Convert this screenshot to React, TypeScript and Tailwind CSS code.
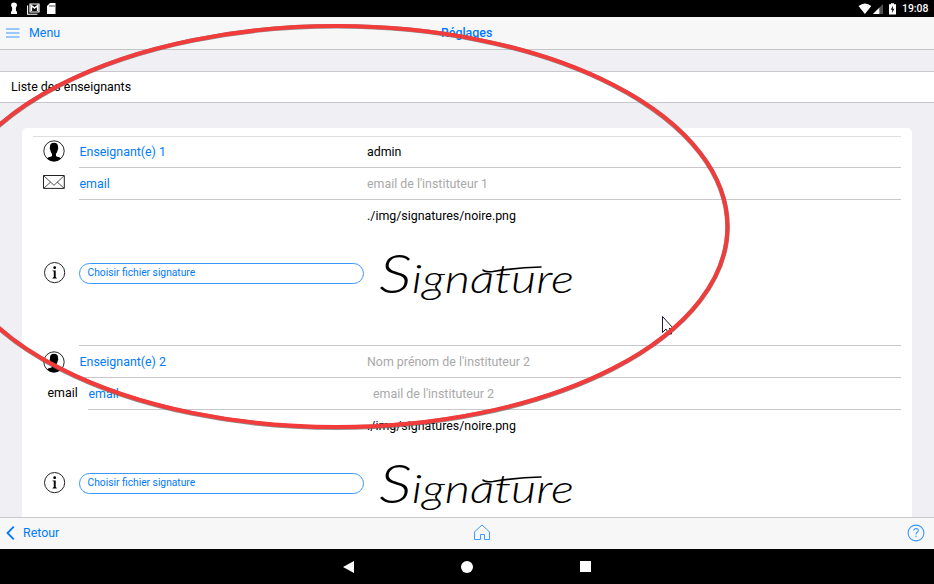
import React from "react";

function StatusBar() {
  return (
    <div className="flex h-[17px] shrink-0 items-center justify-between bg-black pl-[9px] pr-[6px] text-white">
      <div className="flex items-center">
        <svg width="10" height="13" viewBox="0 0 10 13" fill="#fff" className="mr-[8px]">
          <path d="M2 3.5A3 3 0 0 1 8 3.5L6.8 6L7 8.5L8 10V12H2V10L3 8.5L3.2 6Z" />
        </svg>
        <svg width="13" height="12" viewBox="0 0 13 12" fill="none" stroke="#fff" className="mr-[7px]">
          <path d="M.6 2.5V11.2H10.5" strokeWidth="1.1" />
          <path d="M3 1H12V9H3Z" strokeWidth="1.2" />
          <path d="M4.4 8V2.5L7.5 5L10.6 2.5V8" strokeWidth="1.5" />
        </svg>
        <svg width="9" height="11" viewBox="0 0 9 11">
          <path d="M3 0H8.5V11H0V3Z" fill="#fff" />
          <path d="M3 2V4M5 2V4M7 2V4" stroke="#222" strokeWidth=".8" />
        </svg>
      </div>
      <div className="flex items-center">
        <svg width="14" height="12" viewBox="0 0 14 12" className="mr-px">
          <path d="M.5 3Q7-2.2 13.3 3L6.9 11Z" fill="#fff" />
        </svg>
        <svg width="11" height="12" viewBox="0 0 11 12" className="mr-[5px]">
          <path d="M0 11L10 1V11Z" fill="#505050" />
          <path d="M0 11L6.3 4.7V11Z" fill="#fff" />
        </svg>
        <svg width="7" height="12" viewBox="0 0 7 12" className="mr-[6px]">
          <path d="M0 1.3H2V.2H5V1.3H7V11.5H0Z" fill="#fff" />
          <path d="M4 2.5L1.7 6.7H3.2L3 10L5.4 5.7H3.8Z" fill="#111" />
        </svg>
        <span className="w-[26px] whitespace-nowrap pt-px text-[10.4px] font-medium leading-4">19:08</span>
      </div>
    </div>
  );
}

function Person() {
  return (
    <svg width="22" height="22" viewBox="0 0 22 22">
      <circle cx="11" cy="11" r="10.2" fill="#fff" stroke="#111" strokeWidth=".9" />
      <path d="M11 2.7C8 2.7 6.7 4.6 7 7.5C6.4 7.5 6.8 9.5 7.3 10C7.6 12 8.6 13.1 9 14V16C7.8 17.1 5.2 17 4 18.4Q11 24 18 18.4C16.8 17 14.2 17.1 13 16V14C13.4 13.1 14.4 12 14.7 10C15.2 9.5 15.6 7.5 15 7.5C15.3 4.6 14 2.7 11 2.7Z" fill="#000" />
    </svg>
  );
}

function Envelope() {
  return (
    <svg width="22" height="14" viewBox="0 0 22 14" fill="none" stroke="#222">
      <path d="M.5 .5H21.3V13.4H.5Z" strokeWidth="1" />
      <path d="M.8 .8L11 10.3L21 .8M.8 13.2L7.7 7M21 13.2L14.2 7" strokeWidth=".8" />
    </svg>
  );
}

function Info() {
  return (
    <svg width="22" height="22" viewBox="0 0 22 22">
      <circle cx="10.6" cy="10.6" r="10.1" fill="none" stroke="#222" strokeWidth="1" />
      <circle cx="10.7" cy="5.7" r="1.4" />
      <path d="M8.5 8.6H11.7V15.1L12.8 15.9V16.4H8.5V15.9L9.8 15.1V9.4L8.5 9.1Z" />
    </svg>
  );
}

function SignatureBlock() {
  return (
    <div className="flex h-[145px]">
      <div className="flex w-[57px] items-center pl-[21.5px]"><Info /></div>
      <div className="flex w-[288px] items-center pt-px">
        <button className="h-[21px] w-[284.5px] rounded-full border border-[#3a97ff] pb-px pl-[7.5px] text-left text-[10.25px] leading-[18px] text-[#007aff]">
          Choisir fichier signature
        </button>
      </div>
      <div className="flex flex-col pt-[5px]">
        <span className="h-[21px] text-[12.4px] leading-[21px]">./img/signatures/noire.png</span>
        <svg width="220" height="90" viewBox="0 0 220 90" className="mt-[10px] block">
          <text x="12" y="57" textLength="195" lengthAdjust="spacingAndGlyphs" fontSize="40" fontStyle="italic" fontWeight="300" fontFamily="Lato,'Liberation Sans',sans-serif">
            <tspan fontSize="54">S</tspan>ignature
          </text>
          <path d="M116 34Q118 36.5 126 35.5Q150 31.5 174 31" fill="none" stroke="#000" strokeWidth="1.6" strokeLinecap="round" />
        </svg>
      </div>
    </div>
  );
}

const line = "border-b border-[#c8c7cc]";

export default function App() {
  return (
    <div className="relative flex h-[584px] w-[934px] flex-col overflow-hidden bg-[#efeff4] font-['Roboto','Liberation_Sans',sans-serif] text-[12.4px] text-black">
      <StatusBar />
      <header className="flex h-[33px] shrink-0 items-center border-b border-[#c4c4c4] bg-[#f7f7f8] pl-[6px] text-[#007aff]">
        <svg width="14" height="10" viewBox="0 0 14 10" className="mr-[9px]" stroke="#3b98ff" strokeWidth="1"><path d="M0 1H13.5M0 5H13.5M0 9H13.5" /></svg>
        <span className="w-[412px]">Menu</span>
        <span className="font-medium">Réglages</span>
      </header>
      <main className="flex min-h-0 flex-1 flex-col overflow-hidden">
        <div className="mt-[21px] h-[32px] shrink-0 border-y border-[#c8c7cc] bg-white pl-[11px] leading-[30px]">Liste des enseignants</div>
        <section className="ml-[22px] mt-[25px] w-[890px] shrink-0 rounded-t-[5px] bg-white px-[11px] pt-[8px]">
          <div className="flex h-[32px] border-t border-[#dedee1]">
            <div className="flex w-[46px] items-center pb-[3px] pl-[10px]"><Person /></div>
            <div className={"flex flex-1 items-center pl-[0.5px] " + line}>
              <span className="w-[287.5px] text-[#007aff]">Enseignant(e) 1</span><span>admin</span>
            </div>
          </div>
          <div className="flex h-[32px]">
            <div className="flex w-[46px] items-center pb-[4px] pl-[10.4px]"><Envelope /></div>
            <div className={"flex flex-1 items-center pl-[0.5px] pt-px " + line}>
              <span className="w-[287.5px] text-[#007aff]">email</span><span className="text-[#a9a9a9]">email de l'instituteur 1</span>
            </div>
          </div>
          <div className="-ml-[11px]"><SignatureBlock /></div>
          <div className="flex h-[33px]">
            <div className="flex w-[46px] items-center pl-[10px]"><Person /></div>
            <div className={"flex flex-1 items-center border-t pl-[0.5px] pt-px " + line}>
              <span className="w-[287.5px] text-[#007aff]">Enseignant(e) 2</span><span className="text-[#a9a9a9]">Nom prénom de l'instituteur 2</span>
            </div>
          </div>
          <div className="flex h-[32px]">
            <span className="flex w-[55px] items-center pb-px pl-[14.5px]">email</span>
            <div className={"flex flex-1 items-center pl-[0.5px] pt-px " + line}>
              <span className="w-[284.5px] text-[#007aff]">email</span><span className="text-[#a9a9a9]">email de l'instituteur 2</span>
            </div>
          </div>
          <div className="-ml-[11px]"><SignatureBlock /></div>
        </section>
      </main>
      <footer className="flex h-[32px] shrink-0 items-center border-t border-[#c9c9c9] bg-[#f7f7f8] pb-[2px] pl-[6px] pr-[9px] text-[#007aff]">
        <svg width="9" height="14" viewBox="0 0 9 14" className="mr-[8px]" fill="none" stroke="#007aff" strokeWidth="1.8"><path d="M7.8 .7L1.5 7L7.8 13.3" /></svg>
        <span className="w-[450px] pt-px">Retour</span>
        <svg width="18" height="17" viewBox="0 0 18 17" className="mb-px" fill="none" stroke="#3b98ff"><path d="M1.5 7.8L9 1L16.5 7.8V15.5H11.5V10.5H7.5V15.5H1.5Z" /></svg>
        <svg width="18" height="18" viewBox="0 0 18 18" className="ml-auto" fill="none" stroke="#3b98ff" strokeWidth="1.1">
          <circle cx="9" cy="9" r="7.9" /><path d="M6.6 6.5Q7 4.5 9.2 4.5Q11.5 4.7 11.3 6.7Q11.2 7.7 9.8 8.5Q9.1 9 9.1 10.4" /><path d="M9.1 11.7V13" />
        </svg>
      </footer>
      <nav className="flex h-[35px] shrink-0 items-center bg-black pl-[343px]">
        <svg width="11" height="12" viewBox="0 0 11 12"><path d="M0 6L11 0V12Z" fill="#fff" /></svg>
        <span className="ml-[107px] size-3 rounded-full bg-white" />
        <span className="ml-[107px] size-[11px] bg-white" />
      </nav>
      <svg className="pointer-events-none absolute left-0 top-0" width="934" height="584" viewBox="0 0 934 584" fill="none">
        <path d="M662.5 316.5V332.5L666 329L669 334H671.5V330L669 328.5H673.5Z" fill="#fff" stroke="#1b1b30" />
        <ellipse cx="336.5" cy="227" rx="391" ry="200.7" stroke="#555" strokeOpacity=".65" strokeWidth="4.6" />
        <ellipse cx="336.5" cy="226.6" rx="391" ry="200.5" stroke="#f23b3b" strokeWidth="4" />
      </svg>
    </div>
  );
}
